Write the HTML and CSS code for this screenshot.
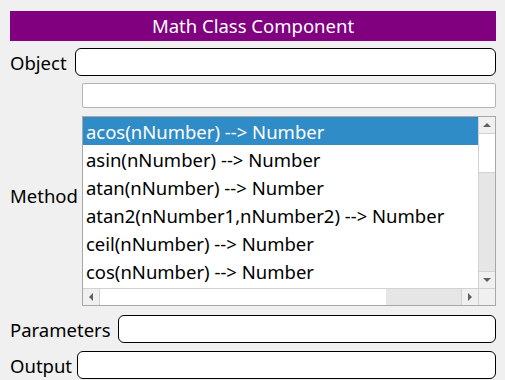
FILE: index.html
```html
<!DOCTYPE html>
<html lang="en">
    <head>
        <meta charset="UTF-8" />
        <meta name="viewport" content="width=device-width, initial-scale=1.0" />
        <title>Math Class Component</title>
        <link rel="stylesheet" href="styles.css">
    </head>
    <body>
        <div class="panel">
            <div class="title">Math Class Component</div>

            <div class="row row-object">
                <label class="label">Object</label>
                <div class="field"></div>
            </div>

            <div class="row row-method">
                <label class="label">Method</label>
                <div class="method-box">
                    <div class="search"></div>
                    <div class="listbox">
                        <div class="list-main">
                            <ul class="list">
                                <li class="list-item selected">acos(nNumber) --&gt; Number</li>
                                <li class="list-item">asin(nNumber) --&gt; Number</li>
                                <li class="list-item">atan(nNumber) --&gt; Number</li>
                                <li class="list-item">atan2(nNumber1,nNumber2) --&gt; Number</li>
                                <li class="list-item">ceil(nNumber) --&gt; Number</li>
                                <li class="list-item">cos(nNumber) --&gt; Number</li>
                            </ul>
                            <!-- vertical scrollbar -->
                            <div class="vscroll">
                                <div class="sb-btn"><span class="arrow arrow-up"></span></div>
                                <div class="vthumb"></div>
                                <div class="vtrack"></div>
                                <div class="sb-btn sb-btn-bottom"><span class="arrow arrow-down"></span></div>
                            </div>
                        </div>
                        <!-- horizontal scrollbar -->
                        <div class="hscroll">
                            <div class="sb-btn sb-btn-h"><span class="arrow arrow-left"></span></div>
                            <div class="hthumb"></div>
                            <div class="htrack"></div>
                            <div class="sb-btn sb-btn-h sb-btn-right"><span class="arrow arrow-right"></span></div>
                            <div class="corner"></div>
                        </div>
                    </div>
                </div>
            </div>

            <div class="row row-params">
                <label class="label">Parameters</label>
                <div class="field"></div>
            </div>

            <div class="row row-output">
                <label class="label">Output</label>
                <div class="field"></div>
            </div>
        </div>
    </body>
</html>
```

FILE: styles.css
```css
html,
body {
    margin: 0;
    background-color: #f0f0f0;
}

body {
    font-family: "Noto Sans", "Open Sans", sans-serif;
    font-size: 18.5px;
    color: #000;
}

.panel {
    width: 486px;
    padding: 11px 0 0 10px;
}

.title {
    height: 30px;
    line-height: 30px;
    background-color: #800080;
    color: #fff;
    text-align: center;
}

.row {
    display: flex;
    align-items: center;
    gap: 7px;
}

.row-object {
    margin-top: 7px;
    gap: 8px;
}

.row-method {
    margin-top: 7px;
    gap: 4px;
}

.row-params {
    margin-top: 9px;
}

.row-output {
    margin-top: 8px;
    gap: 5px;
}

.label {
    white-space: nowrap;
    line-height: 24px;
    padding-top: 2px;
}

.field {
    flex: 1;
    height: 26px;
    background-color: #fff;
    border: 1px solid #000;
    border-radius: 6px;
}

.method-box {
    flex: 1;
    display: flex;
    flex-direction: column;
    gap: 8px;
}

.search {
    height: 23px;
    background-color: #fff;
    border: 1px solid #b4b4b4;
    border-radius: 2px;
}

/* 리스트 박스 */
.listbox {
    height: 188px;
    border: 1px solid #a8a8a8;
    background-color: #fff;
    display: flex;
    flex-direction: column;
}

.list-main {
    flex: 1;
    display: flex;
    overflow: hidden;
}

.list {
    flex: 1;
    margin: 0;
    padding: 0;
    list-style: none;
    overflow: hidden;
}

.list-item {
    height: 26px;
    line-height: 26px;
    padding: 2px 0 0 3px;
    white-space: nowrap;
}

.list-item.selected {
    background-color: #308cc6;
    color: #fff;
}

/* 스크롤바 */
.vscroll {
    width: 16px;
    display: flex;
    flex-direction: column;
    border-left: 1px solid #d2d2d2;
}

.sb-btn {
    height: 16px;
    display: flex;
    align-items: center;
    justify-content: center;
    background-color: #f0f0f0;
    border-bottom: 1px solid #d2d2d2;
}

.sb-btn-bottom {
    border-bottom: none;
    border-top: 1px solid #d2d2d2;
}

.vthumb {
    height: 38px;
    background-color: #fff;
    border-bottom: 1px solid #d2d2d2;
}

.vtrack {
    flex: 1;
    background-color: #e6e6e6;
}

.hscroll {
    height: 16px;
    display: flex;
    border-top: 1px solid #d2d2d2;
}

.sb-btn-h {
    width: 16px;
    height: 16px;
    border-bottom: none;
    border-right: 1px solid #d2d2d2;
}

.sb-btn-right {
    border-right: 1px solid #d2d2d2;
    border-left: 1px solid #d2d2d2;
}

.hthumb {
    width: 286px;
    background-color: #fff;
}

.htrack {
    flex: 1;
    background-color: #e6e6e6;
}

.corner {
    width: 16px;
    background-color: #f0f0f0;
}

.arrow {
    width: 0;
    height: 0;
}

.arrow-up {
    border-left: 4px solid transparent;
    border-right: 4px solid transparent;
    border-bottom: 4px solid #606060;
}

.arrow-down {
    border-left: 4px solid transparent;
    border-right: 4px solid transparent;
    border-top: 4px solid #606060;
}

.arrow-left {
    border-top: 4px solid transparent;
    border-bottom: 4px solid transparent;
    border-right: 4px solid #606060;
}

.arrow-right {
    border-top: 4px solid transparent;
    border-bottom: 4px solid transparent;
    border-left: 4px solid #606060;
}
```
